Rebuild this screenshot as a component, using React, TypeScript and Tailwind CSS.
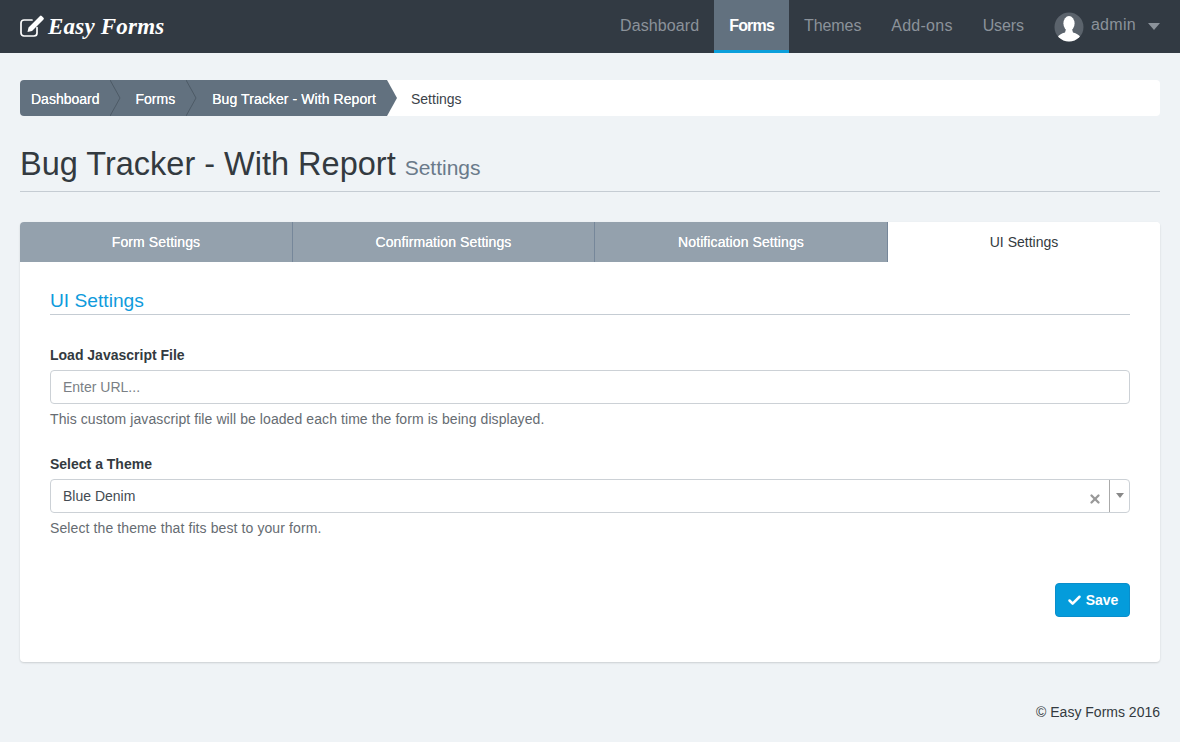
import React from "react";
import { Check, X } from "lucide-react";

const navItems = [
  { label: "Dashboard", className: "tracking-[0.1px] text-[#8b929a]" },
  { label: "Forms", className: "" },
  { label: "Themes", className: "tracking-[-0.1px]" },
  { label: "Add-ons", className: "tracking-[0.25px]" },
  { label: "Users", className: "tracking-[-0.1px]" },
];

const LogoIcon = () => (
  <svg width="26" height="24" viewBox="0 0 26 24" fill="none" className="shrink-0 -ml-px">
    <path d="M18 12.5V18a3 3 0 0 1-3 3H5a3 3 0 0 1-3-3V8a3 3 0 0 1 3-3h8" stroke="white" strokeWidth="1.7" strokeLinecap="round" />
    <path d="M9.500 12.500l-1 4.500 4.500-1L24.500 4.500a1.2 1.2 0 0 0 0-1.700L22.700 1a1.2 1.2 0 0 0-1.700 0L9.500 12.500z" fill="white" />
  </svg>
);

const Avatar = () => (
  <svg width="30" height="30" viewBox="0 0 30 30" className="shrink-0">
    <defs>
      <clipPath id="avatar-clip">
        <circle cx="15" cy="15" r="14.5" />
      </clipPath>
    </defs>
    <circle cx="15" cy="15" r="14.5" fill="#5b636c" />
    <g clipPath="url(#avatar-clip)">
      <ellipse cx="15" cy="11.5" rx="5.6" ry="7.5" fill="white" />
      <path d="M12 17h6l1 3.500c3.500 1 6.500 2.500 7.500 5V31H3.500v-5.500c1-2.500 4-4 7.500-5z" fill="white" />
    </g>
  </svg>
);

const Crumb = ({ label, className, last }: { label: string; className: string; last?: boolean }) => (
  <div className={`relative flex h-full items-center bg-[#62717f] pt-px text-white ${className}`}>
    {label}
    <svg width="11" height="36" viewBox="0 0 11 36" className="absolute left-full top-0 z-10">
      <path d="M0 0l10 18L0 36z" fill="#62717f" />
      {!last && <path d="M0 0l10 18L0 36" fill="none" stroke="#4d5a66" strokeWidth="1" />}
    </svg>
  </div>
);

const tabClass =
  "flex h-full items-center justify-center border-r border-[#76879a] bg-[#94a1ad] tracking-[0.1px] text-white [text-shadow:0_0_0.6px_white]";

const App = () => {
  return (
    <div className="flex min-h-[742px] flex-col bg-[#eff3f6] font-['Liberation_Sans',Arial,sans-serif] text-sm text-[#333a40]">
      <header className="flex h-[53px] items-center justify-between bg-[#323a43] px-5">
        <div className="flex items-center gap-[3px]">
          <LogoIcon />
          <span className="font-['Liberation_Serif',serif] text-[23px] font-bold italic leading-none tracking-[0.2px] text-white">
            Easy Forms
          </span>
        </div>
        <nav className="flex h-full items-stretch text-base text-[#8b929a]">
          {navItems.map((item) =>
            item.label === "Forms" ? (
              <a
                key={item.label}
                className="flex items-center border-b-[3px] border-[#0b9fdb] bg-[#62717f] px-[15px] pt-[2px] font-bold tracking-[-0.8px] text-white"
              >
                {item.label}
              </a>
            ) : (
              <a key={item.label} className={`flex items-center px-[15px] pb-px ${item.className}`}>
                {item.label}
              </a>
            ),
          )}
          <div className="ml-[15px] flex items-center">
            <Avatar />
            <span className="ml-[7px] pb-[3px] tracking-[0.3px]">admin</span>
            <svg width="12" height="7" viewBox="0 0 12 7" className="ml-[12px]">
              <path d="M0 0h12L6 7z" fill="#8b929a" />
            </svg>
          </div>
        </nav>
      </header>

      <main className="flex flex-1 flex-col px-5 pt-[27px]">
        <div className="flex h-9 items-stretch rounded bg-white [text-shadow:0_0_0.3px_currentColor]">
          <Crumb label="Dashboard" className="rounded-l pl-[11px] pr-[10px]" />
          <Crumb label="Forms" className="pl-[26px] pr-[11px]" />
          <Crumb label="Bug Tracker - With Report" className="pl-[26px] pr-[11px] tracking-[0.08px]" last />
          <span className="flex items-center pl-[24px] pt-px text-[#3b4249] [text-shadow:none]">Settings</span>
        </div>

        <div className="mt-[28px] flex items-baseline gap-[9px] border-b border-[#c5ccd3] pb-[6px]">
          <h1 className="text-[32.5px] leading-[41px] text-[#333a40]">Bug Tracker - With Report</h1>
          <small className="text-[21px] text-[#6a7a8a]">Settings</small>
        </div>

        <section className="mt-[30px] overflow-hidden rounded bg-white shadow-[0_1px_2px_rgba(0,0,0,0.15)]">
          <div className="flex h-10 items-center text-center">
            <div className={`${tabClass} w-[273px]`}>Form Settings</div>
            <div className={`${tabClass} w-[302px]`}>Confirmation Settings</div>
            <div className={`${tabClass} w-[293px]`}>Notification Settings</div>
            <div className="flex h-full flex-1 items-center justify-center bg-white text-[#333a40]">UI Settings</div>
          </div>

          <div className="px-[30px] pb-[45px] pt-[27px]">
            <h2 className="border-b border-[#c5ccd3] pb-[2px] text-[19.2px] leading-[23px] text-[#0f9bdc]">UI Settings</h2>

            <label className="mt-[32px] block font-bold leading-4 text-[#333a40]">Load Javascript File</label>
            <input
              placeholder="Enter URL..."
              className="mt-[7px] block h-[34px] w-full rounded border border-[#ccd1d6] px-3 text-sm placeholder:text-[#7a7f85]"
            />
            <p className="mt-[7px] leading-4 tracking-[0.08px] text-[#666c72]">
              This custom javascript file will be loaded each time the form is being displayed.
            </p>

            <label className="mt-[29px] block font-bold leading-4 text-[#333a40]">Select a Theme</label>
            <div className="mt-[7px] flex h-[34px] items-stretch rounded border border-[#ccd1d6]">
              <span className="flex flex-1 items-center pl-3 text-[#444b52]">Blue Denim</span>
              <span className="flex items-center pr-[7px] pt-[5px]">
                <X size={14} strokeWidth={4} className="text-[#999999]" />
              </span>
              <span className="flex w-5 items-start justify-center border-l border-[#aaaaaa] pt-[13px]">
                <svg width="8" height="5" viewBox="0 0 8 5">
                  <path d="M0 0h8L4 5z" fill="#888888" />
                </svg>
              </span>
            </div>
            <p className="mt-[7px] leading-4 tracking-[0.1px] text-[#666c72]">Select the theme that fits best to your form.</p>

            <div className="mt-[47px] flex justify-end">
              <button className="flex h-[34px] w-[75px] items-center justify-center gap-1 rounded border border-[#0a8ecb] bg-[#049cdb] font-bold text-white">
                <Check size={15} strokeWidth={4} />
                Save
              </button>
            </div>
          </div>
        </section>

        <footer className="mt-[42px] text-right leading-4 text-[#333a40]">© Easy Forms 2016</footer>
      </main>
    </div>
  );
};

export default App;
